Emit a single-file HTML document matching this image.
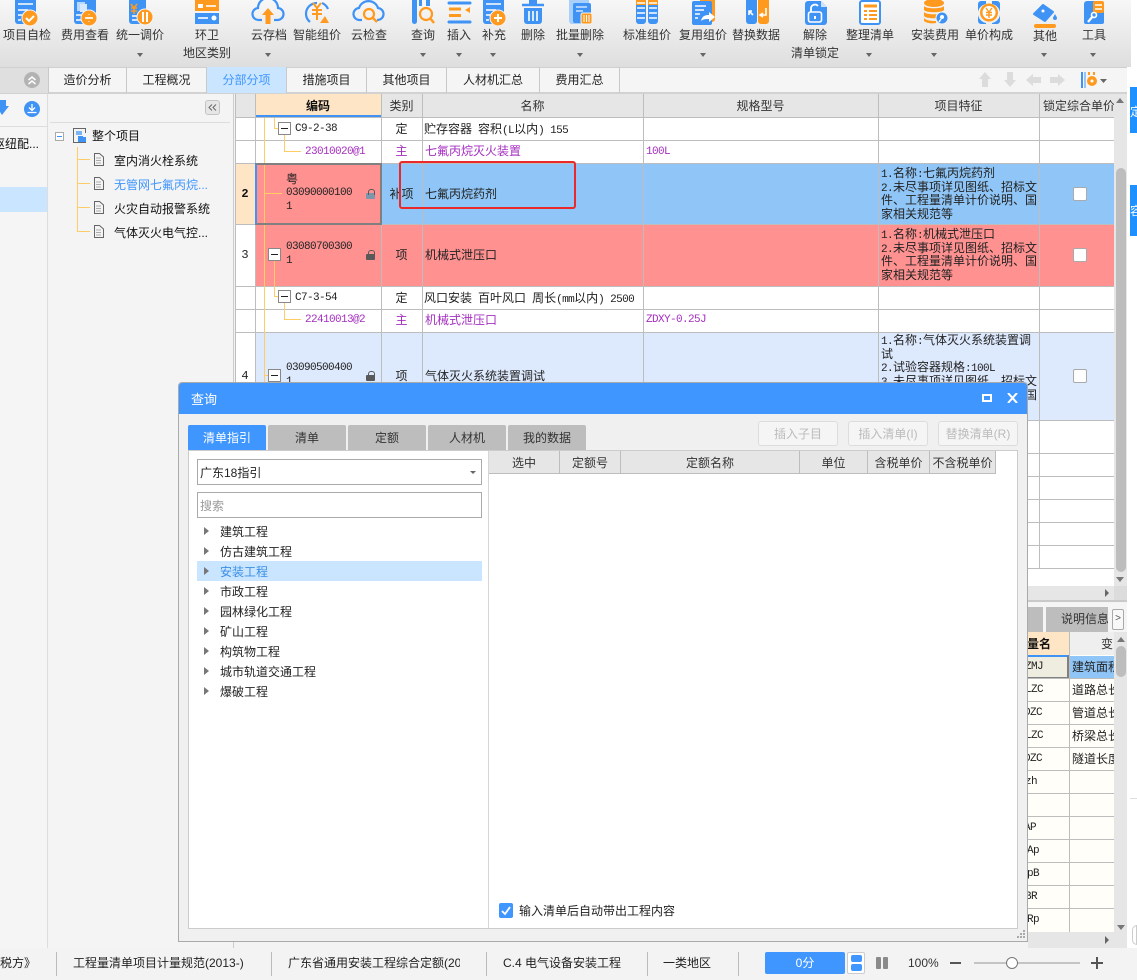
<!DOCTYPE html>
<html lang="zh"><head><meta charset="utf-8"><title>查询</title>
<style>
*{box-sizing:border-box}
html,body{margin:0;padding:0;width:1137px;height:980px;overflow:hidden;background:#f3f3f3}
body{position:relative;font:12px/16px "Liberation Sans","WenQuanYi Zen Hei","Noto Sans CJK SC",sans-serif;color:#222}
.a{position:absolute}
.t{position:absolute;white-space:nowrap}
.c{position:absolute;text-align:center;white-space:nowrap}
.h{position:absolute;background:#bdbdbd}
.m{font-family:"Liberation Mono","WenQuanYi Zen Hei",monospace;font-size:11px;letter-spacing:-.6px}
span.m{line-height:0}
.tb{position:absolute;top:26px;width:80px;text-align:center;color:#333;line-height:18px;white-space:nowrap}
.ar{position:absolute;width:0;height:0;border-left:3.500px solid transparent;border-right:3.500px solid transparent;border-top:4px solid #666;top:53px}
.tab{position:absolute;top:67px;height:26px;border-right:1px solid #c9c9c9;text-align:center;line-height:27px;color:#222}
.o{position:absolute;background:#fc6}
.mb{position:absolute;width:13px;height:13px;border:1px solid #888;background:#fff}
.mb:after{content:"";position:absolute;left:2px;right:2px;top:5px;height:1px;background:#222}
.lk{position:absolute;width:9px;height:6px;background:#595959;border-radius:1px}
.lk:before{content:"";position:absolute;left:2px;top:-4px;width:5px;height:5px;border:1px solid #595959;border-bottom:0;border-radius:3px 3px 0 0}
.cb{position:absolute;left:1073px;width:14px;height:14px;background:#fff;border:1px solid #aaa;border-radius:2px}
.f{position:absolute;left:881px;width:157px;line-height:13.7px;font-size:12px;color:#222;white-space:normal;word-break:break-all}
.dt{position:absolute;top:425px;width:78px;height:25px;background:#bdbdbd;border-radius:2px 2px 0 0;text-align:center;line-height:26px;color:#333}
.bt{position:absolute;top:421px;width:80px;height:25px;background:#f5f5f5;border:1px solid #ddd;border-radius:3px;text-align:center;line-height:24px;color:#bbb}
.th{position:absolute;top:451px;height:23px;background:#e6e6e6;border-right:1px solid #bdbdbd;border-bottom:1px solid #bdbdbd;text-align:center;line-height:25px;color:#333}
.tr{position:absolute;left:220px;color:#222}
.tri{position:absolute;left:204px;width:0;height:0;border-top:4px solid transparent;border-bottom:4px solid transparent;border-left:5px solid #777}
.rw{position:absolute;left:1028px;width:86px;height:1px;background:#bdbdbd}
.sp{position:absolute;top:952px;width:1px;height:24px;background:#bbb}
</style></head><body>

<!-- toolbar -->
<div class="a" style="left:0;top:0;width:1137px;height:67px;background:#fff"></div>
<div class="a" style="left:0;top:0;width:1131px;height:67px;background:linear-gradient(#f7f7f7,#dedede)"></div>
<svg class="a" style="left:0;top:0" width="1137" height="30" viewBox="0 0 1137 30" fill="none">
<!-- 项目自检 -->
<rect x="15" y="-4" width="21" height="28" rx="3" fill="#3f93f5"/><path d="M18 4h15M18 10h10M18 15h6M18 20h3" stroke="#fff" stroke-width="1.6"/><circle cx="30" cy="18" r="8" fill="#ff9a1f" stroke="#f3f3f3"/><path d="M26 18l3 3 5-5" stroke="#fff" stroke-width="2"/>
<!-- 费用查看 -->
<rect x="74" y="-4" width="22" height="28" rx="3" fill="#3f93f5"/><rect x="77" y="2" width="8" height="9" fill="#b9d8fb"/><rect x="80" y="4" width="7" height="8" fill="#d8e9fd"/><path d="M76 15h6M76 20h6" stroke="#fff" stroke-width="1.6"/><circle cx="89" cy="18" r="8" fill="#ff9a1f" stroke="#f3f3f3"/><path d="M85 18h8M89 14.500v.5M89 21v.5" stroke="#fff" stroke-width="1.800"/>
<!-- 统一调价 -->
<rect x="129" y="-4" width="17" height="28" rx="3" fill="#3f93f5"/><path d="M131 4l3 4 3-4M131 8h6M131 11h6M134 7v7" stroke="#ff9a1f" stroke-width="1.600"/><path d="M132 16h5M132 20h5" stroke="#fff" stroke-width="1.400"/><circle cx="145" cy="17" r="8" fill="#ff9a1f" stroke="#f3f3f3"/><path d="M143 12v10M147 12v10" stroke="#fff" stroke-width="2"/>
<!-- 环卫 -->
<rect x="195" y="-4" width="24" height="15" fill="#ff9a1f"/><rect x="198" y="4" width="5" height="4" fill="#fff"/><path d="M206 6h10" stroke="#fff" stroke-width="1.600"/><rect x="195" y="13" width="24" height="11" fill="#3f93f5"/><path d="M198 18h10" stroke="#fff" stroke-width="1.600"/><circle cx="214" cy="18" r="2.500" fill="#fff"/>
<!-- 云存档 -->
<path d="M262 20h-3a6 6 0 0 1-1-12 10 10 0 0 1 20 0 6 6 0 0 1-1 12h-3" stroke="#3f93f5" stroke-width="2.200"/><path d="M268 8l6 7h-3.500v9h-5v-9h-3.500z" fill="#ff9a1f"/>
<!-- 智能组价 -->
<path d="M306 13a11 11 0 0 1 11-10" stroke="#3f93f5" stroke-width="2.200"/><path d="M310 22a11 11 0 0 1-4-9M322 3a11 11 0 0 1 6 6" stroke="#3f93f5" stroke-width="2.200"/><path d="M313 3l4 5 4-5M312 10h10M312 14h10M317 8v12" stroke="#ff9a1f" stroke-width="2"/><path d="M320 23l5-7 4 7z" fill="#ff9a1f"/>
<!-- 云检查 -->
<path d="M362 20h-2a6 6 0 0 1-1-12 10 10 0 0 1 19 0 6 6 0 0 1-1 12" stroke="#3f93f5" stroke-width="2.200"/><circle cx="369" cy="14" r="5" stroke="#ff9a1f" stroke-width="2.200"/><path d="M373 18l4 4" stroke="#ff9a1f" stroke-width="2.400"/>
<!-- 查询 -->
<rect x="412" y="-4" width="5" height="28" rx="2.500" fill="#3f93f5"/><rect x="419" y="-4" width="3" height="10" fill="#3f93f5"/><rect x="426" y="-4" width="4" height="10" fill="#3f93f5"/><circle cx="426" cy="14" r="6" stroke="#ff9a1f" stroke-width="2.200"/><path d="M430 18l4 5" stroke="#ff9a1f" stroke-width="2.400"/>
<!-- 插入 -->
<path d="M449 3h21M449 22h21" stroke="#3f93f5" stroke-width="3" stroke-linecap="round"/><path d="M449 9h12M449 15.500h12" stroke="#ff9a1f" stroke-width="3"/><path d="M470 7v6l-5-3z" fill="#ff9a1f"/>
<!-- 补充 -->
<rect x="483" y="-4" width="21" height="28" rx="3" fill="#3f93f5"/><path d="M486 4h15M486 10h10M486 15h6M486 20h3" stroke="#fff" stroke-width="1.600"/><circle cx="498" cy="18" r="8" fill="#ff9a1f" stroke="#f3f3f3"/><path d="M494 18h8M498 14v8" stroke="#fff" stroke-width="2"/>
<!-- 删除 -->
<path d="M522 5h22" stroke="#3f93f5" stroke-width="2.400"/><rect x="529" y="0" width="8" height="4" fill="#3f93f5"/><path d="M524 8h18v13a3 3 0 0 1-3 3h-12a3 3 0 0 1-3-3z" fill="#3f93f5"/><path d="M529 11v10M533 11v10M537 11v10" stroke="#fff" stroke-width="1.600"/>
<!-- 批量删除 -->
<rect x="569" y="-4" width="20" height="28" rx="3" fill="#a9d0fa"/><rect x="573" y="3" width="18" height="20" rx="2" fill="#3f93f5"/><path d="M576 7h11M576 11h7" stroke="#cfe4fb" stroke-width="1.400"/><rect x="581" y="13" width="11" height="11" rx="2" fill="#ff9a1f" stroke="#f3f3f3"/><path d="M584 15v7M586.500 15v7M589 15v7" stroke="#fff"/>
<!-- 标准组价 -->
<rect x="636" y="-2" width="10" height="26" rx="3" fill="#3f93f5"/><rect x="648" y="-2" width="10" height="26" rx="3" fill="#3f93f5"/><rect x="636" y="-2" width="10" height="7" fill="#ff9a1f"/><rect x="648" y="-2" width="10" height="7" fill="#ff9a1f"/><path d="M637 8h8M649 8h8M637 13h8M649 13h8M637 18h8M649 18h8M637 3h8M649 3h8" stroke="#fff" stroke-width="1.500"/>
<!-- 复用组价 -->
<rect x="700" y="-4" width="15" height="26" rx="3" fill="#ff9a1f"/><rect x="692" y="1" width="20" height="24" rx="2" fill="#3f93f5"/><path d="M695 6h11M695 10h9M695 14h5M695 18h3" stroke="#fff" stroke-width="1.400"/><path d="M701 21c1-5 4-6 8-6v-3l6 5-6 5v-3c-3 0-6 0-8 2z" fill="#fff"/>
<!-- 替换数据 -->
<rect x="746" y="-4" width="11" height="28" rx="3" fill="#3f93f5"/><rect x="758" y="-4" width="11" height="28" rx="3" fill="#ff9a1f"/><path d="M749 15v-4h3M749 11l4 4" stroke="#fff" stroke-width="1.600"/><path d="M766 8v7h-5M763 17l-3-2 3-2" stroke="#fff" stroke-width="1.600"/>
<!-- 解除 -->
<path d="M805 4a3 3 0 0 1 3-3h13l6 6v15a3 3 0 0 1-3 3h-16a3 3 0 0 1-3-3z" fill="#3f93f5"/><path d="M821 1v6h6z" fill="#cfe4fb"/><rect x="808.500" y="12" width="13" height="10" rx="2" stroke="#fff" stroke-width="1.600"/><path d="M811 12V8a4 4 0 0 1 7-2" stroke="#fff" stroke-width="1.800"/><path d="M815 16v3" stroke="#fff" stroke-width="2"/>
<!-- 整理清单 -->
<rect x="860" y="1" width="20" height="23" rx="2" fill="#fff" stroke="#3f93f5" stroke-width="2"/><path d="M864 6h13" stroke="#ff9a1f" stroke-width="3"/><path d="M864 11h3M869 11h8M864 15h3M869 15h8M864 19h3M869 19h8" stroke="#ff9a1f" stroke-width="2"/>
<!-- 安装费用 -->
<ellipse cx="934" cy="3" rx="10" ry="4" fill="#ff9a1f"/><path d="M924 6c2 3 18 3 20 0v4c-2 3-18 3-20 0zM924 12c2 3 18 3 20 0v4c-2 3-18 3-20 0zM924 18c2 3 10 3 12 3v2c-4 1-10 0-12-2z" fill="#ff9a1f"/><circle cx="942" cy="18" r="6" fill="#3f93f5" stroke="#f3f3f3"/><circle cx="942" cy="17" r="2" fill="#fff"/><path d="M941 19l-2 3" stroke="#fff" stroke-width="1.500"/>
<!-- 单价构成 -->
<path d="M978 4a3 3 0 0 1 3-3h5v3a10 10 0 0 0-8 8zM1000 4a3 3 0 0 0-3-3h-5v3a10 10 0 0 1 8 8zM978 15a10 10 0 0 0 8 8v1h-5a3 3 0 0 1-3-3zM1000 15a10 10 0 0 1-8 8v1h5a3 3 0 0 0 3-3z" fill="#3f93f5"/><circle cx="989" cy="12.500" r="9" fill="#ff9a1f"/><circle cx="989" cy="12.500" r="6.500" fill="#fff"/><path d="M986 8l3 4 3-4M986 12.500h6M986 15h6M989 12v6" stroke="#ff9a1f" stroke-width="1.400"/>
<!-- 其他 -->
<path d="M1034 14l9-9 10 7-8 9z" fill="#3f93f5" stroke="#3f93f5" stroke-width="2" stroke-linejoin="round"/><circle cx="1043" cy="11" r="1.500" fill="#fff"/><path d="M1055 14c1 2 2 3 2 4a2 2 0 0 1-4 0c0-1 1-2 2-4z" fill="#3f93f5"/><rect x="1034" y="24" width="22" height="4" rx="2" fill="#ff9a1f"/>
<!-- 工具 -->
<path d="M1084 4a3 3 0 0 1 3-3h14a3 3 0 0 1 3 3v18a2 2 0 0 1-2 2h-16a2 2 0 0 1-2-2z" fill="#3f93f5"/><rect x="1093" y="1" width="11" height="12" rx="2" fill="#ff9a1f"/><path d="M1095 5h7M1095 9h7" stroke="#fff" stroke-width="1.500"/><path d="M1088 22l5-6" stroke="#fff" stroke-width="2.200"/><circle cx="1094" cy="15" r="2.500" stroke="#fff" stroke-width="1.600"/>
</svg>
<div class="tb" style="left:-13px">项目自检</div>
<div class="tb" style="left:45px">费用查看</div>
<div class="tb" style="left:100px">统一调价</div><div class="ar" style="left:137px"></div>
<div class="tb" style="left:167px">环卫<br>地区类别</div>
<div class="tb" style="left:229px">云存档</div><div class="ar" style="left:265px"></div>
<div class="tb" style="left:277px">智能组价</div>
<div class="tb" style="left:329px">云检查</div>
<div class="tb" style="left:383px">查询</div><div class="ar" style="left:420px"></div>
<div class="tb" style="left:419px">插入</div><div class="ar" style="left:456px"></div>
<div class="tb" style="left:454px">补充</div><div class="ar" style="left:490px"></div>
<div class="tb" style="left:493px">删除</div>
<div class="tb" style="left:540px">批量删除</div><div class="ar" style="left:577px"></div>
<div class="tb" style="left:607px">标准组价</div>
<div class="tb" style="left:663px">复用组价</div><div class="ar" style="left:700px"></div>
<div class="tb" style="left:716px">替换数据</div>
<div class="tb" style="left:775px">解除<br>清单锁定</div>
<div class="tb" style="left:830px">整理清单</div><div class="ar" style="left:866px"></div>
<div class="tb" style="left:895px">安装费用</div><div class="ar" style="left:931px"></div>
<div class="tb" style="left:949px">单价构成</div>
<div class="tb" style="left:1005px;top:27px">其他</div><div class="ar" style="left:1041px"></div>
<div class="tb" style="left:1054px">工具</div><div class="ar" style="left:1090px"></div>

<!-- tabs row -->
<div class="a" style="left:0;top:67px;width:1127px;height:27px;background:#f5f5f5;border-top:1px solid #d0d0d0;border-bottom:2px solid #d2d2d2"></div>
<div class="a" style="left:0;top:68px;width:48px;height:25px;background:#dfdfdf"></div>
<div class="a" style="left:24px;top:72px;width:16px;height:16px;border-radius:50%;background:#b3b3b3"></div>
<svg class="a" style="left:24px;top:72px" width="16" height="16" fill="none"><path d="M4.500 8l3.500-3 3.500 3M4.500 12l3.500-3 3.500 3" stroke="#fff" stroke-width="1.500"/></svg>
<div class="tab" style="left:48px;width:79px;border-left:1px solid #c9c9c9">造价分析</div>
<div class="tab" style="left:127px;width:80px">工程概况</div>
<div class="tab" style="left:207px;width:80px;background:#c9e5ff;color:#4096ff">分部分项</div>
<div class="tab" style="left:287px;width:80px">措施项目</div>
<div class="tab" style="left:367px;width:80px">其他项目</div>
<div class="tab" style="left:447px;width:93px">人材机汇总</div>
<div class="tab" style="left:540px;width:80px">费用汇总</div>
<svg class="a" style="left:975px;top:70px" width="140" height="20"><g fill="#dcdcdc"><path d="M10 2l6 7h-3v8H7V9H4zM35 17l-6-7h3V2h6v8h3zM51 10l7-6v3h8v6h-8v3zM90 10l-7-6v3h-8v6h8v3z"/></g><path d="M107 2v16" stroke="#3f93f5" stroke-width="2"/><path d="M110 2v16" stroke="#3f93f5" stroke-width="1"/><circle cx="117" cy="11" r="5" fill="#ff9a1f"/><circle cx="117" cy="11" r="1.500" fill="#fff"/><rect x="113" y="2" width="2" height="3" fill="#ff9a1f"/><rect x="118" y="2" width="2" height="3" fill="#ff9a1f"/><path d="M125 9h7l-3.500 4z" fill="#666"/></svg>

<!-- far right strip -->
<div class="a" style="left:1127px;top:67px;width:10px;height:881px;background:#fff"></div>
<div class="a" style="left:1130px;top:87px;width:7px;height:46px;background:#1e90ff"></div>
<div class="a" style="left:1130px;top:185px;width:7px;height:51px;background:#1e90ff"></div>
<div class="t" style="left:1130px;top:104px;color:#fff">定</div>
<div class="t" style="left:1130px;top:203px;color:#fff">容</div>
<div class="a" style="left:1130px;top:798px;width:7px;height:1px;background:#ddd"></div>
<div class="a" style="left:1132px;top:925px;width:5px;height:20px;background:#fff;border:1px solid #ccc;border-radius:10px 0 0 10px"></div>

<!-- left panels -->
<div class="a" style="left:0;top:94px;width:48px;height:854px;background:#f5f5f5;border-right:1px solid #ddd"></div>
<div class="a" style="left:0;top:126px;width:47px;height:1px;background:#ddd"></div>
<svg class="a" style="left:0;top:100px" width="42" height="18" fill="none"><path d="M-2 0h8v6h3l-7 9-6-9h2z" fill="#3f93f5"/><circle cx="32" cy="9" r="8" fill="#3f93f5"/><path d="M32 4v6M29 7.500l3 3 3-3M27.500 12.500h9" stroke="#fff" stroke-width="1.300"/></svg>
<div class="a" style="left:0;top:136px;width:46px;overflow:hidden;white-space:nowrap;color:#111"><span style="margin-left:-7px;display:inline-block">枢纽配...</span></div>
<div class="a" style="left:0;top:187px;width:47px;height:25px;background:#c9e5ff"></div>

<div class="a" style="left:49px;top:94px;width:185px;height:854px;background:#f4f4f4;border-right:1px solid #ccc"></div>
<div class="a" style="left:205px;top:100px;width:15px;height:15px;background:#e6e6e6;border:1px solid #c4c4c4;border-radius:3px"></div>
<svg class="a" style="left:205px;top:100px" width="15" height="15" fill="none"><path d="M7 4.500l-3 3 3 3M11 4.500l-3 3 3 3" stroke="#666" stroke-width="1"/></svg>
<div class="a" style="left:50px;top:122px;width:180px;height:1px;background:#ddd"></div>
<div class="a" style="left:55px;top:132px;width:9px;height:9px;border:1px solid #aaa;background:#fff"></div>
<div class="a" style="left:57px;top:136px;width:5px;height:1px;background:#3f93f5"></div>
<svg class="a" style="left:73px;top:128px" width="16" height="15" fill="none"><path d="M.5 .5h12v14h-12z" stroke="#666"/><rect x="3" y="3" width="6" height="4" fill="#7ab4f5"/><rect x="5" y="8" width="8" height="6" fill="#3f93f5"/><rect x="10" y="5" width="5" height="4" fill="#f4f4f4"/></svg>
<div class="t" style="left:92px;top:128px;color:#111">整个项目</div>
<div class="o" style="left:77px;top:147px;width:1px;height:85px"></div>
<div class="o" style="left:77px;top:159px;width:13px;height:1px"></div>
<div class="o" style="left:77px;top:183px;width:13px;height:1px"></div>
<div class="o" style="left:77px;top:207px;width:13px;height:1px"></div>
<div class="o" style="left:77px;top:231px;width:13px;height:1px"></div>
<svg class="a" style="left:94px;top:153px" width="10" height="90" fill="none" stroke="#666"><path d="M.5 .5h5l4 3.500v8.500h-9z"/><path d="M2 5h5M2 7.500h5M2 10h5" stroke="#aaa"/><g transform="translate(0 24)"><path d="M.5 .5h5l4 3.500v8.500h-9z"/><path d="M2 5h5M2 7.500h5M2 10h5" stroke="#aaa"/></g><g transform="translate(0 48)"><path d="M.5 .5h5l4 3.500v8.500h-9z"/><path d="M2 5h5M2 7.500h5M2 10h5" stroke="#aaa"/></g><g transform="translate(0 72)"><path d="M.5 .5h5l4 3.500v8.500h-9z"/><path d="M2 5h5M2 7.500h5M2 10h5" stroke="#aaa"/></g></svg>
<div class="t" style="left:114px;top:153px;color:#111">室内消火栓系统</div>
<div class="t" style="left:114px;top:177px;color:#4096ff">无管网七氟丙烷...</div>
<div class="t" style="left:114px;top:201px;color:#111">火灾自动报警系统</div>
<div class="t" style="left:114px;top:225px;color:#111">气体灭火电气控...</div>

<!-- main grid -->
<div class="a" style="left:235px;top:94px;width:879px;height:492px;background:#fff"></div>
<div class="a" style="left:235px;top:94px;width:879px;height:23px;background:#e6e6e6"></div>
<div class="a" style="left:255px;top:94px;width:126px;height:23px;background:#fee5c6;border-bottom:2px solid #3f93f5"></div>
<div class="a" style="left:235px;top:163px;width:20px;height:61px;background:#fee5c6"></div>
<div class="a" style="left:255px;top:163px;width:859px;height:61px;background:#8fc6f7"></div>
<div class="a" style="left:255px;top:224px;width:859px;height:62px;background:#ff9191"></div>
<div class="a" style="left:255px;top:332px;width:859px;height:88px;background:#dde9fd"></div>
<!-- horizontal lines -->
<div class="h" style="left:235px;top:117px;width:879px;height:1px"></div>
<div class="h" style="left:235px;top:140px;width:879px;height:1px"></div>
<div class="h" style="left:235px;top:163px;width:879px;height:1px"></div>
<div class="h" style="left:235px;top:224px;width:879px;height:1px"></div>
<div class="h" style="left:235px;top:286px;width:879px;height:1px"></div>
<div class="h" style="left:235px;top:309px;width:879px;height:1px"></div>
<div class="h" style="left:235px;top:332px;width:879px;height:1px"></div>
<div class="h" style="left:235px;top:420px;width:879px;height:1px"></div>
<div class="h" style="left:235px;top:453px;width:879px;height:1px"></div>
<div class="h" style="left:235px;top:476px;width:879px;height:1px"></div>
<div class="h" style="left:235px;top:499px;width:879px;height:1px"></div>
<div class="h" style="left:235px;top:522px;width:879px;height:1px"></div>
<div class="h" style="left:235px;top:545px;width:879px;height:1px"></div>
<div class="h" style="left:235px;top:568px;width:879px;height:1px"></div>
<!-- vertical lines -->
<div class="h" style="left:235px;top:94px;width:1px;height:475px"></div>
<div class="h" style="left:255px;top:94px;width:1px;height:475px"></div>
<div class="h" style="left:381px;top:94px;width:1px;height:475px"></div>
<div class="h" style="left:422px;top:94px;width:1px;height:475px"></div>
<div class="h" style="left:643px;top:94px;width:1px;height:475px"></div>
<div class="h" style="left:878px;top:94px;width:1px;height:475px"></div>
<div class="h" style="left:1039px;top:94px;width:1px;height:475px"></div>
<!-- header text -->
<div class="c" style="left:255px;top:98px;width:126px;font-weight:bold;color:#111">编码</div>
<div class="c" style="left:381px;top:98px;width:41px;color:#333">类别</div>
<div class="c" style="left:422px;top:98px;width:221px;color:#333">名称</div>
<div class="c" style="left:643px;top:98px;width:235px;color:#333">规格型号</div>
<div class="c" style="left:878px;top:98px;width:161px;color:#333">项目特征</div>
<div class="t" style="left:1043px;top:98px;width:71px;overflow:hidden;color:#333">锁定综合单价</div>
<!-- tree lines -->
<div class="o" style="left:264px;top:118px;width:1px;height:265px"></div>
<div class="o" style="left:274px;top:118px;width:1px;height:11px"></div>
<div class="o" style="left:274px;top:128px;width:5px;height:1px"></div>
<div class="o" style="left:284px;top:135px;width:1px;height:16px"></div>
<div class="o" style="left:284px;top:151px;width:17px;height:1px"></div>
<div class="o" style="left:264px;top:193px;width:18px;height:1px"></div>
<div class="o" style="left:274px;top:260px;width:1px;height:37px"></div>
<div class="o" style="left:274px;top:296px;width:5px;height:1px"></div>
<div class="o" style="left:284px;top:303px;width:1px;height:16px"></div>
<div class="o" style="left:284px;top:319px;width:17px;height:1px"></div>
<div class="o" style="left:264px;top:375px;width:5px;height:1px"></div>
<div class="mb" style="left:278px;top:122px"></div>
<div class="mb" style="left:268px;top:248px"></div>
<div class="mb" style="left:278px;top:290px"></div>
<div class="mb" style="left:268px;top:369px"></div>
<!-- selected cell -->
<div class="a" style="left:255px;top:163px;width:127px;height:62px;background:#ff9191;border:2px solid #808080;border-left-color:#3f93f5"></div>
<div class="o" style="left:264px;top:165px;width:1px;height:58px"></div>
<div class="o" style="left:264px;top:193px;width:18px;height:1px"></div>
<div class="c" style="left:235px;top:186px;width:20px;font-weight:bold;font-family:'Liberation Mono',monospace;color:#111">2</div>
<div class="c" style="left:235px;top:247px;width:20px;font-family:'Liberation Mono',monospace">3</div>
<div class="c" style="left:235px;top:368px;width:20px;font-family:'Liberation Mono',monospace">4</div>
<!-- row content -->
<div class="t m" style="left:295px;top:121px">C9-2-38</div>
<div class="c" style="left:381px;top:121px;width:41px">定</div>
<div class="t" style="left:424px;top:121px">贮存容器<span class="m"> </span>容积<span class="m">(L</span>以内<span class="m">) 155</span></div>
<div class="t m" style="left:305px;top:144px;color:#a52ec0">23010020@1</div>
<div class="c" style="left:381px;top:143px;width:41px;color:#a52ec0">主</div>
<div class="t" style="left:425px;top:143px;color:#a52ec0">七氟丙烷灭火装置</div>
<div class="t m" style="left:646px;top:144px;color:#a52ec0">100L</div>

<div class="t" style="left:286px;top:171px">粤</div>
<div class="t m" style="left:286px;top:186px;line-height:14px">03090000100<br>1</div>
<div class="lk" style="left:366px;top:193px;background:#7d96ab"></div>
<div class="c" style="left:381px;top:186px;width:41px">补项</div>
<div class="t" style="left:425px;top:186px">七氟丙烷药剂</div>
<div class="f" style="top:167px"><span class="m">1.</span>名称<span class="m">:</span>七氟丙烷药剂<br><span class="m">2.</span>未尽事项详见图纸、招标文件、工程量清单计价说明、国家相关规范等</div>
<div class="cb" style="top:187px"></div>

<div class="t m" style="left:286px;top:240px;line-height:14px">03080700300<br>1</div>
<div class="lk" style="left:366px;top:254px"></div>
<div class="c" style="left:381px;top:247px;width:41px">项</div>
<div class="t" style="left:425px;top:247px">机械式泄压口</div>
<div class="f" style="top:228px"><span class="m">1.</span>名称<span class="m">:</span>机械式泄压口<br><span class="m">2.</span>未尽事项详见图纸、招标文件、工程量清单计价说明、国家相关规范等</div>
<div class="cb" style="top:248px"></div>

<div class="t m" style="left:295px;top:290px">C7-3-54</div>
<div class="c" style="left:381px;top:290px;width:41px">定</div>
<div class="t" style="left:424px;top:290px">风口安装<span class="m"> </span>百叶风口<span class="m"> </span>周长<span class="m">(mm</span>以内<span class="m">) 2500</span></div>
<div class="t m" style="left:305px;top:312px;color:#a52ec0">22410013@2</div>
<div class="c" style="left:381px;top:312px;width:41px;color:#a52ec0">主</div>
<div class="t" style="left:425px;top:312px;color:#a52ec0">机械式泄压口</div>
<div class="t m" style="left:646px;top:312px;color:#a52ec0">ZDXY-0.25J</div>

<div class="t m" style="left:286px;top:361px;line-height:14px">03090500400<br>1</div>
<div class="lk" style="left:366px;top:375px"></div>
<div class="c" style="left:381px;top:368px;width:41px">项</div>
<div class="t" style="left:425px;top:368px">气体灭火系统装置调试</div>
<div class="f" style="top:334px"><span class="m">1.</span>名称<span class="m">:</span>气体灭火系统装置调试<br><span class="m">2.</span>试验容器规格<span class="m">:100L</span><br><span class="m">3.</span>未尽事项详见图纸、招标文件、工程量清单计价说明、国</div>
<div class="cb" style="top:369px"></div>

<!-- red annotation -->
<div class="a" style="left:399px;top:161px;width:177px;height:48px;border:2px solid #ea2a2a;border-radius:3px"></div>

<!-- main scrollbars -->
<div class="a" style="left:1114px;top:94px;width:13px;height:492px;background:#e6e6e6"></div>
<div class="a" style="left:1116px;top:168px;width:10px;height:404px;background:#bdbdbd;border-radius:5px"></div>
<div class="a" style="left:1116px;top:98px;width:0;height:0;border-left:4px solid transparent;border-right:4px solid transparent;border-bottom:5px solid #777"></div>
<div class="a" style="left:1116px;top:577px;width:0;height:0;border-left:4px solid transparent;border-right:4px solid transparent;border-top:5px solid #777"></div>
<div class="a" style="left:235px;top:586px;width:892px;height:14px;background:#e6e6e6"></div>
<div class="a" style="left:1105px;top:589px;width:0;height:0;border-top:4px solid transparent;border-bottom:4px solid transparent;border-left:4px solid #666"></div>
<div class="a" style="left:1114px;top:586px;width:13px;height:14px;background:#dcdcdc"></div>
<div class="a" style="left:235px;top:600px;width:892px;height:2px;background:#c9c9c9"></div>

<!-- lower right -->
<div class="a" style="left:1028px;top:603px;width:99px;height:30px;background:#f5f5f5"></div>
<div class="a" style="left:1028px;top:607px;width:15px;height:25px;background:#bdbdbd"></div>
<div class="a" style="left:1046px;top:607px;width:62px;height:25px;background:#bdbdbd;line-height:25px;text-indent:15px;color:#333;overflow:hidden;white-space:nowrap">说明信息</div>
<div class="a" style="left:1112px;top:609px;width:12px;height:21px;background:#f8f8f8;border:1px solid #aaa;border-radius:2px;text-align:center;line-height:18px;color:#555;font-size:10px">&gt;</div>
<div class="a" style="left:1000px;top:632px;width:114px;height:300px;background:#fffef9"></div>
<div class="a" style="left:1000px;top:632px;width:69px;height:23px;background:#fee5c6"></div>
<div class="a" style="left:1069px;top:632px;width:45px;height:23px;background:#efefef"></div>
<div class="t" style="left:1027px;top:636px;font-weight:bold;color:#111">量名</div>
<div class="t" style="left:1101px;top:636px;width:13px;overflow:hidden;color:#333">变</div>
<div class="a" style="left:1000px;top:655px;width:69px;height:24px;background:#efede0;border-top:2px solid #3f93f5;border-bottom:2px solid #808080;border-right:2px solid #808080"></div>
<div class="a" style="left:1070px;top:656px;width:44px;height:22px;background:#8fc6f7"></div>
<div class="rw" style="top:678px"></div><div class="rw" style="top:701px"></div><div class="rw" style="top:724px"></div><div class="rw" style="top:747px"></div><div class="rw" style="top:770px"></div><div class="rw" style="top:793px"></div><div class="rw" style="top:816px"></div><div class="rw" style="top:839px"></div><div class="rw" style="top:862px"></div><div class="rw" style="top:885px"></div><div class="rw" style="top:908px"></div>
<div class="h" style="left:1069px;top:632px;width:1px;height:300px"></div>
<div class="t m" style="left:1025px;top:659px">ZMJ</div>
<div class="t m" style="left:1025px;top:682px">LZC</div>
<div class="t m" style="left:1024px;top:705px">DZC</div>
<div class="t m" style="left:1025px;top:728px">LZC</div>
<div class="t m" style="left:1024px;top:751px">DZC</div>
<div class="t m" style="left:1025px;top:774px">zh</div>
<div class="t m" style="left:1024px;top:820px">AP</div>
<div class="t m" style="left:1027px;top:843px">Ap</div>
<div class="t m" style="left:1027px;top:866px">pB</div>
<div class="t m" style="left:1025px;top:889px">BR</div>
<div class="t m" style="left:1027px;top:912px">Rp</div>
<div class="t" style="left:1072px;top:659px;width:42px;overflow:hidden">建筑面积</div>
<div class="t" style="left:1072px;top:682px;width:42px;overflow:hidden">道路总长</div>
<div class="t" style="left:1072px;top:705px;width:42px;overflow:hidden">管道总长</div>
<div class="t" style="left:1072px;top:728px;width:42px;overflow:hidden">桥梁总长</div>
<div class="t" style="left:1072px;top:751px;width:42px;overflow:hidden">隧道长度</div>
<div class="a" style="left:1114px;top:632px;width:13px;height:300px;background:#e6e6e6"></div>
<div class="a" style="left:1116px;top:646px;width:10px;height:31px;background:#bdbdbd;border-radius:5px"></div>
<div class="a" style="left:1117px;top:637px;width:0;height:0;border-left:4px solid transparent;border-right:4px solid transparent;border-bottom:5px solid #777"></div>
<div class="a" style="left:1117px;top:925px;width:0;height:0;border-left:4px solid transparent;border-right:4px solid transparent;border-top:5px solid #777"></div>
<div class="a" style="left:1028px;top:932px;width:99px;height:16px;background:#e6e6e6"></div>
<div class="a" style="left:1105px;top:936px;width:0;height:0;border-top:4px solid transparent;border-bottom:4px solid transparent;border-left:4px solid #666"></div>

<!-- dialog -->
<div class="a" style="left:178px;top:382px;width:850px;height:560px;background:#f0f0f0;border:1px solid #aaa;border-radius:4px 4px 0 0"></div>
<div class="a" style="left:179px;top:383px;width:848px;height:31px;background:#4096ff;border-radius:3px 3px 0 0"></div>
<div class="t" style="left:191px;top:392px;color:#fff;font-size:13px">查询</div>
<div class="a" style="left:982px;top:394px;width:10px;height:8px;border:2px solid #fff"></div>
<svg class="a" style="left:1007px;top:393px" width="11" height="10"><path d="M1 0l9 10M10 0l-9 10" stroke="#fff" stroke-width="2"/></svg>
<div class="dt" style="left:188px;background:#4096ff;color:#fff">清单指引</div>
<div class="dt" style="left:268px">清单</div>
<div class="dt" style="left:348px">定额</div>
<div class="dt" style="left:428px">人材机</div>
<div class="dt" style="left:508px">我的数据</div>
<div class="bt" style="left:758px">插入子目</div>
<div class="bt" style="left:848px">插入清单(I)</div>
<div class="bt" style="left:938px">替换清单(R)</div>
<div class="a" style="left:188px;top:450px;width:830px;height:479px;background:#fff;border:1px solid #ccc"></div>
<div class="a" style="left:488px;top:451px;width:1px;height:477px;background:#d5d5d5"></div>
<div class="a" style="left:197px;top:459px;width:285px;height:26px;border:1px solid #aaa;background:#fff;line-height:26px;padding-left:2px;color:#222">广东18指引</div>
<div class="a" style="left:470px;top:471px;width:0;height:0;border-left:3px solid transparent;border-right:3px solid transparent;border-top:3px solid #666"></div>
<div class="a" style="left:197px;top:492px;width:285px;height:26px;border:1px solid #aaa;background:#fff;line-height:26px;padding-left:2px;color:#999">搜索</div>
<div class="a" style="left:197px;top:561px;width:285px;height:20px;background:#c9e5ff"></div>
<div class="tri" style="top:527px"></div><div class="tr" style="top:524px">建筑工程</div>
<div class="tri" style="top:547px"></div><div class="tr" style="top:544px">仿古建筑工程</div>
<div class="tri" style="top:567px"></div><div class="tr" style="top:564px;color:#3a8ee6">安装工程</div>
<div class="tri" style="top:587px"></div><div class="tr" style="top:584px">市政工程</div>
<div class="tri" style="top:607px"></div><div class="tr" style="top:604px">园林绿化工程</div>
<div class="tri" style="top:627px"></div><div class="tr" style="top:624px">矿山工程</div>
<div class="tri" style="top:647px"></div><div class="tr" style="top:644px">构筑物工程</div>
<div class="tri" style="top:667px"></div><div class="tr" style="top:664px">城市轨道交通工程</div>
<div class="tri" style="top:687px"></div><div class="tr" style="top:684px">爆破工程</div>
<div class="th" style="left:489px;width:71px">选中</div>
<div class="th" style="left:560px;width:61px">定额号</div>
<div class="th" style="left:621px;width:179px">定额名称</div>
<div class="th" style="left:800px;width:68px">单位</div>
<div class="th" style="left:868px;width:62px">含税单价</div>
<div class="th" style="left:930px;width:66px">不含税单价</div>
<div class="a" style="left:499px;top:903px;width:14px;height:15px;background:#4096ff;border-radius:2px"></div>
<svg class="a" style="left:499px;top:903px" width="14" height="15" fill="none"><path d="M3 8l3 3 5-7" stroke="#fff" stroke-width="1.800"/></svg>
<div class="t" style="left:519px;top:903px;color:#222">输入清单后自动带出工程内容</div>
<svg class="a" style="left:1017px;top:930px" width="9" height="9" fill="#aaa"><rect x="6" y="0" width="2" height="2"/><rect x="3" y="3" width="2" height="2"/><rect x="6" y="3" width="2" height="2"/><rect x="0" y="6" width="2" height="2"/><rect x="3" y="6" width="2" height="2"/><rect x="6" y="6" width="2" height="2"/></svg>

<!-- status bar -->
<div class="a" style="left:0;top:948px;width:1137px;height:32px;background:#f3f3f3"></div>
<div class="t" style="left:0;top:955px">税方》</div>
<div class="sp" style="left:56px"></div>
<div class="t" style="left:73px;top:955px;width:172px;overflow:hidden">工程量清单项目计量规范(2013-)</div>
<div class="sp" style="left:271px"></div>
<div class="t" style="left:288px;top:955px;width:172px;overflow:hidden">广东省通用安装工程综合定额(20</div>
<div class="sp" style="left:486px"></div>
<div class="t" style="left:503px;top:955px">C.4 电气设备安装工程</div>
<div class="sp" style="left:647px"></div>
<div class="t" style="left:663px;top:955px">一类地区</div>
<div class="sp" style="left:738px"></div>
<div class="a" style="left:765px;top:952px;width:80px;height:22px;background:#4096ff;border-radius:2px;color:#fff;text-align:center;line-height:22px">0分</div>
<div class="a" style="left:847px;top:952px;width:18px;height:22px;background:#fff;border:1px solid #ccc;border-radius:2px"></div>
<div class="a" style="left:851px;top:955px;width:11px;height:7px;background:#4096ff;border-radius:2px"></div>
<div class="a" style="left:851px;top:964px;width:11px;height:7px;background:#4096ff;border-radius:2px"></div>
<div class="a" style="left:876px;top:957px;width:5px;height:12px;background:#8a8a8a;border-radius:1px"></div>
<div class="a" style="left:883px;top:957px;width:5px;height:12px;background:#8a8a8a;border-radius:1px"></div>
<div class="t" style="left:908px;top:955px;color:#333">100%</div>
<div class="a" style="left:950px;top:962px;width:11px;height:2px;background:#555"></div>
<div class="a" style="left:974px;top:962px;width:106px;height:2px;background:#c4c4c4"></div>
<div class="a" style="left:1006px;top:957px;width:12px;height:12px;border-radius:50%;background:#fff;border:1px solid #777"></div>
<div class="a" style="left:1091px;top:962px;width:12px;height:2px;background:#555"></div>
<div class="a" style="left:1096px;top:957px;width:2px;height:12px;background:#555"></div>
</body></html>
